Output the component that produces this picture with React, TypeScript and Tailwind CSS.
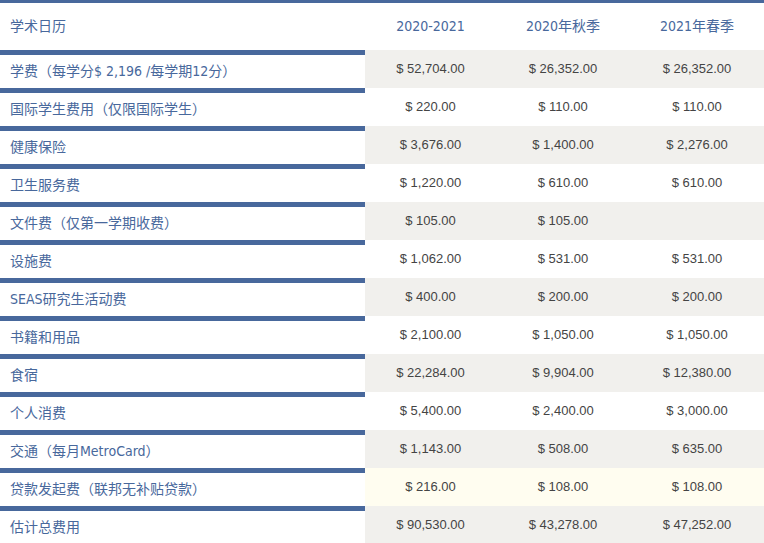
const rows: [string, string, string, string, string][] = [
  ["学费（每学分$ 2,196 /每学期12分）", "$ 52,704.00", "$ 26,352.00", "$ 26,352.00", "bg-[#f1f0ed]"],
  ["国际学生费用（仅限国际学生）", "$ 220.00", "$ 110.00", "$ 110.00", "bg-white"],
  ["健康保险", "$ 3,676.00", "$ 1,400.00", "$ 2,276.00", "bg-[#f1f0ed]"],
  ["卫生服务费", "$ 1,220.00", "$ 610.00", "$ 610.00", "bg-white"],
  ["文件费（仅第一学期收费）", "$ 105.00", "$ 105.00", "", "bg-[#f1f0ed]"],
  ["设施费", "$ 1,062.00", "$ 531.00", "$ 531.00", "bg-white"],
  ["SEAS研究生活动费", "$ 400.00", "$ 200.00", "$ 200.00", "bg-[#f1f0ed]"],
  ["书籍和用品", "$ 2,100.00", "$ 1,050.00", "$ 1,050.00", "bg-white"],
  ["食宿", "$ 22,284.00", "$ 9,904.00", "$ 12,380.00", "bg-[#f1f0ed]"],
  ["个人消费", "$ 5,400.00", "$ 2,400.00", "$ 3,000.00", "bg-white"],
  ["交通（每月MetroCard）", "$ 1,143.00", "$ 508.00", "$ 635.00", "bg-[#f1f0ed]"],
  ["贷款发起费（联邦无补贴贷款）", "$ 216.00", "$ 108.00", "$ 108.00", "bg-[#fffdf0]"],
  ["估计总费用", "$ 90,530.00", "$ 43,278.00", "$ 47,252.00", "bg-[#f1f0ed]"],
];
const cond = { fontFamily: '"DejaVu Sans Condensed","Noto Sans CJK SC",sans-serif' };
export default function App() {
  return (
    <div className="w-[764px] h-[543px] overflow-hidden bg-white">
      <div className="h-[3px] bg-[#48689c]" />
      <div className="flex h-[47px] items-center text-[#48689c] text-[14px]" style={cond}>
        <div className="w-[365px] pl-[10px]">学术日历</div>
        <div className="w-[131px] text-center">2020-2021</div>
        <div className="w-[134px] text-center">2020年秋季</div>
        <div className="w-[134px] text-center">2021年春季</div>
      </div>
      {rows.map((r, i) => (
        <div key={i} className="flex h-[38px]">
          <div className="w-[365px] flex flex-col">
            <div className="h-[5px] bg-[#48689c]" />
            <div className="flex-1 flex items-center pl-[10px] text-[14px] text-[#48689c]" style={cond}>{r[0]}</div>
          </div>
          <div className={`flex-1 flex items-center text-[13px] text-[#444] ${r[4]}`} style={{ fontFamily: '"Liberation Sans",sans-serif' }}>
            <div className="w-[131px] text-center">{r[1]}</div>
            <div className="w-[134px] text-center">{r[2]}</div>
            <div className="w-[134px] text-center">{r[3]}</div>
          </div>
        </div>
      ))}
    </div>
  );
}
